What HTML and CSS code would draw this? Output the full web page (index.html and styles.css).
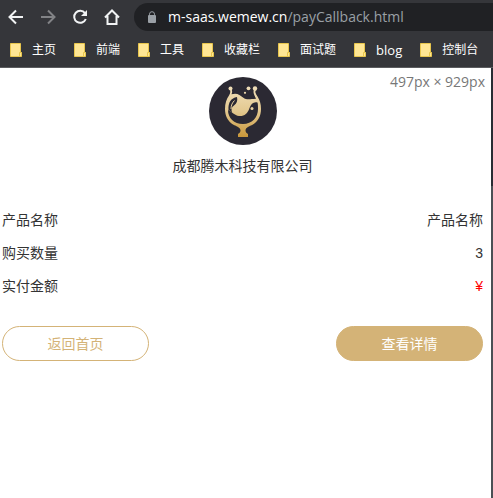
FILE: index.html
```html
<!DOCTYPE html>
<html lang="zh-CN">
<head>
<meta charset="utf-8">
<meta name="viewport" content="width=device-width, initial-scale=1">
<title>支付结果</title>
<link rel="stylesheet" href="styles.css">
</head>
<body>
<header class="browser">
  <div class="toolbar">
    <nav class="controls">
      <button class="control" type="button" aria-label="后退"><svg viewBox="0 0 16 16"><path d="M15 8H2M8 1.500L1.500 8L8 14.500"/></svg></button>
      <button class="control control-off" type="button" aria-label="前进"><svg viewBox="0 0 16 16"><path d="M1 8h13M8 1.500L14.500 8L8 14.500"/></svg></button>
      <button class="control" type="button" aria-label="刷新"><svg viewBox="0 0 16 16"><path d="M13 4.200A6 6 0 1 0 13.800 10"/><path class="solid" d="M15 1v6H9z"/></svg></button>
      <button class="control" type="button" aria-label="主页"><svg viewBox="0 0 16 16"><path d="M1 8.500L8 1.500l7 7M3.500 7v8h9V7"/></svg></button>
    </nav>
    <div class="address">
      <svg class="lock" viewBox="0 0 10 12"><path class="shackle" d="M2.500 5V3.200a2.500 2.500 0 0 1 5 0V5"/><rect x="1" y="4" width="8" height="8" rx="1"/></svg>
      <span class="url"><span class="host">m-saas.wemew.cn</span>/payCallback.html</span>
    </div>
  </div>
  <nav class="bookmarks">
    <a class="bookmark" href="#"><svg class="folder" viewBox="0 0 12 14"><path d="M.5.5h10v9h1v4H.5z"/><path d="M9.500 13V9.500h2"/></svg>主页</a>
    <a class="bookmark" href="#"><svg class="folder" viewBox="0 0 12 14"><path d="M.5.5h10v9h1v4H.5z"/><path d="M9.500 13V9.500h2"/></svg>前端</a>
    <a class="bookmark" href="#"><svg class="folder" viewBox="0 0 12 14"><path d="M.5.5h10v9h1v4H.5z"/><path d="M9.500 13V9.500h2"/></svg>工具</a>
    <a class="bookmark" href="#"><svg class="folder" viewBox="0 0 12 14"><path d="M.5.5h10v9h1v4H.5z"/><path d="M9.500 13V9.500h2"/></svg>收藏栏</a>
    <a class="bookmark" href="#"><svg class="folder" viewBox="0 0 12 14"><path d="M.5.5h10v9h1v4H.5z"/><path d="M9.500 13V9.500h2"/></svg>面试题</a>
    <a class="bookmark bookmark-latin" href="#"><svg class="folder" viewBox="0 0 12 14"><path d="M.5.5h10v9h1v4H.5z"/><path d="M9.500 13V9.500h2"/></svg>blog</a>
    <a class="bookmark" href="#"><svg class="folder" viewBox="0 0 12 14"><path d="M.5.5h10v9h1v4H.5z"/><path d="M9.500 13V9.500h2"/></svg>控制台</a>
  </nav>
</header>
<div class="viewport">
  <main class="page">
    <span class="size-tip">497px × 929px</span>
    <section class="merchant">
      <svg class="logo" viewBox="6 5 68 68" role="img" aria-label="logo">
        <defs>
          <linearGradient id="gold" gradientUnits="userSpaceOnUse" x1="40" y1="14" x2="40" y2="65">
            <stop offset="0" stop-color="#f0dfba"/><stop offset=".5" stop-color="#e3c88f"/><stop offset="1" stop-color="#c8963a"/>
          </linearGradient>
        </defs>
        <circle cx="40" cy="39" r="34" fill="#2b2933"/>
        <g fill="url(#gold)">
          <circle cx="27.500" cy="16.500" r="2"/>
          <circle cx="45.500" cy="16.300" r="1.900"/>
          <circle cx="52" cy="16.500" r="2.200"/>
          <circle cx="42" cy="20.800" r="1.100"/>
          <path d="M27 17l1.800 1C29.500 20 29 21 28.500 22.300C34 20.500 37 23 40 25.500C44 28.500 47 27 53 26.800C52 24.500 50.500 22 50.500 20C50.500 18.500 51 17.500 52 17l1 1C51.500 20 53 22 54.500 24.500C57 28.500 58 32 58 37C58 44 55 49.500 50 52.500C46 54.500 43 55.500 42.500 58C42.300 60 43.500 61 45 62V65H35V62C36.500 61 37.700 60 37.500 58C37 55.500 34 54.500 30 52.500C25 49.500 22 44 22 37C22 31.500 23.500 27 26 23.500C27.500 21 27.500 19.500 27 17z"/>
        </g>
        <path fill="#2b2933" d="M54.500 30.500C50.500 29.500 48 32 46.500 36C44.500 42 41 44.500 36 44C31.500 43.500 29 39.500 25 38C25 46 31 52 40 52C49 52 55 45.500 55 37C55 34.500 55 32 54.500 30.500z"/>
        <path fill="#2b2933" d="M34 25C28 26 25 30.500 25.500 38L29 40.500C28 37.500 28.500 35 31 33.500C34 31.500 34.800 28.500 34 25z"/>
        <path fill="none" stroke="url(#gold)" d="M28 37C28 33 29.500 30.500 31.500 28.500"/>
        <circle cx="49" cy="36.500" r="1.500" fill="#e8d1a0"/>
      </svg>
      <h1 class="merchant-name">成都腾木科技有限公司</h1>
    </section>
    <dl class="order">
      <div class="row"><dt>产品名称</dt><dd>产品名称</dd></div>
      <div class="row"><dt>购买数量</dt><dd>3</dd></div>
      <div class="row"><dt>实付金额</dt><dd class="amount">¥</dd></div>
    </dl>
    <div class="actions">
      <button class="action" type="button">返回首页</button>
      <button class="action action-primary" type="button">查看详情</button>
    </div>
  </main>
  <div class="edge"></div>
</div>
</body>
</html>
```
FILE: styles.css
```css
* {
  box-sizing: border-box;
}

body {
  display: flex;
  flex-direction: column;
  min-height: 100vh;
  margin: 0;
  background: #fff;
  color: #333;
  font: 14px/20px "Liberation Sans", "Noto Sans CJK SC", sans-serif;
}

.browser {
  padding-top: 3px;
  border-bottom: 1px solid #5b5c5f;
  background: #35363a;
  font-family: "Open Sans", "Noto Sans CJK SC", sans-serif;
  white-space: nowrap;
  overflow: hidden;
}

.toolbar {
  display: flex;
  gap: 14px;
  height: 28px;
  padding-left: 8px;
}

.controls {
  display: flex;
  align-items: center;
  gap: 16px;
}

.control {
  width: 16px;
  height: 16px;
  padding: 0;
  border: 0;
  background: none;
  color: #f1f3f4;
}

.control-off {
  color: #828386;
}

.control svg {
  display: block;
  fill: none;
  stroke: currentColor;
  stroke-width: 2;
}

.control .solid {
  fill: currentColor;
  stroke: none;
}

.address {
  display: flex;
  flex: 1;
  align-items: center;
  gap: 11px;
  padding-left: 13px;
  border-radius: 14px 0 0 14px;
  background: #202124;
}

.lock {
  width: 10px;
  height: 12px;
  fill: #9aa0a6;
}

.shackle {
  fill: none;
  stroke: #9aa0a6;
}

.url {
  color: #9aa0a6;
}

.host {
  color: #fff;
}

.bookmarks {
  display: flex;
  align-items: center;
  gap: 18px;
  height: 36px;
  padding: 2px 0 0 10px;
}

.bookmark {
  display: flex;
  align-items: center;
  gap: 10px;
  color: #fff;
  font-size: 12px;
  text-decoration: none;
}

.bookmark-latin {
  font-size: 13px;
}

.folder {
  width: 12px;
  height: 14px;
  fill: #ffe694;
  stroke: #e8c64d;
}

.viewport {
  display: flex;
  flex: 1;
}

.page {
  position: relative;
  flex: 1;
  padding: 9px 8px 0 2px;
}

.size-tip {
  position: absolute;
  top: 4px;
  right: 6px;
  color: #777;
  font-family: "Open Sans", sans-serif;
}

.edge {
  width: 2px;
  background: linear-gradient(#292c33 118px, #4b4f54 118px);
}

.merchant {
  display: flex;
  flex-direction: column;
  align-items: center;
  gap: 11px;
}

.logo {
  width: 68px;
  height: 68px;
}

.merchant-name {
  margin: 0;
  font-size: 14px;
  font-weight: 400;
}

.order {
  display: grid;
  gap: 13px;
  margin: 34px 0 30px;
}

.row {
  display: flex;
  justify-content: space-between;
}

.row dd {
  margin: 0;
}

.row .amount {
  color: #f00;
}

.actions {
  display: flex;
  justify-content: space-between;
}

.action {
  width: 147px;
  height: 35px;
  padding: 0;
  border: 1px solid #d4b377;
  border-radius: 18px;
  background: #fff;
  color: #d4b377;
  font: inherit;
}

.action-primary {
  background: #d4b377;
  color: #fff;
}
```
